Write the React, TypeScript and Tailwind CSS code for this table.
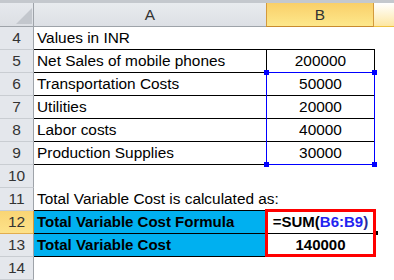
import React from "react";

type CellProps = { className?: string; children?: React.ReactNode };

const RowHead = ({ n, active }: { n: number; active?: boolean }) => (
  <div
    className={
      "w-[34px] shrink-0 h-[23px] border-r border-b text-center leading-[22px] text-[15.5px] text-[#333] " +
      (active
        ? "bg-gradient-to-b from-[#f9d574] to-[#fde28a] border-r-[#d39a3c] border-b-[#e2ad4f]"
        : "bg-[#e4e7ec] border-r-[#9ea3a9] border-b-[#c9cdd2]")
    }
  >
    {n}
  </div>
);

const A = ({ className = "", children }: CellProps) => (
  <div className={"w-[233px] shrink-0 h-[23px] pl-[3px] leading-[22px] whitespace-nowrap " + className}>{children}</div>
);
const B = ({ className = "", children }: CellProps) => (
  <div className={"w-[108px] shrink-0 h-[23px] text-center leading-[22px] whitespace-nowrap " + className}>{children}</div>
);

const Row = ({ children }: { children: React.ReactNode }) => <div className="flex h-[23px]">{children}</div>;

export default function App() {
  return (
    <div className="relative w-[394px] h-[280px] overflow-hidden bg-white text-black text-[15.4px] font-['Liberation_Sans',Arial,sans-serif]">
      {/* top strip */}
      <div className="h-[3px] bg-[#c4c8cd]" />
      {/* column headers */}
      <div className="flex h-[24px]">
        <div className="relative w-[34px] shrink-0 border-r border-b border-r-[#9ea3a9] border-b-[#9ea3a9] bg-gradient-to-b from-[#e6e9ed] to-[#dcdfe4]">
          <svg className="absolute right-[1px] bottom-[2px]" width="16" height="16" viewBox="0 0 16 16">
            <polygon points="16,0 16,16 0,16" fill="#c3c7cd" />
          </svg>
        </div>
        <div className="w-[233px] shrink-0 border-r border-b border-r-[#b8bcc2] border-b-[#9ea3a9] bg-gradient-to-b from-[#e8ebee] to-[#dde0e5] text-center leading-[23px] text-[#333]">
          A
        </div>
        <div className="w-[108px] shrink-0 border-x border-b border-x-[#d39a3c] border-b-[#c88a2e] bg-gradient-to-b from-[#f9cf68] to-[#fde88c] text-center leading-[23px] text-[#333] -ml-[1px]">
          B
        </div>
        <div className="flex-1 border-b border-b-[#efc142] bg-gradient-to-b from-[#ffffff] to-[#fde7a2]" />
      </div>

      <Row>
        <RowHead n={4} />
        <A className="border-b border-b-black">Values in INR</A>
        <B className="border-b border-b-black" />
      </Row>
      {[
        ["Net Sales of mobile phones", "200000"],
        ["Transportation Costs", "50000"],
        ["Utilities", "20000"],
        ["Labor costs", "40000"],
        ["Production Supplies", "30000"],
      ].map(([label, val], i) => (
        <Row key={label}>
          <RowHead n={5 + i} />
          <A className="border-b border-r border-black">{label}</A>
          <B className="border-b border-r border-black">{val}</B>
        </Row>
      ))}
      <Row>
        <RowHead n={10} />
        <A />
        <B />
      </Row>
      <Row>
        <RowHead n={11} />
        <A className="border-b border-b-black">Total Variable Cost is calculated as:</A>
        <B className="border-b border-b-black" />
      </Row>
      <Row>
        <RowHead n={12} active />
        <A className="bg-[#00b0f0] border-b border-r border-black font-bold text-[15px]">Total Variable Cost Formula</A>
        <B className="border-b border-r border-black font-bold text-[15px]">
          =SUM(<span className="text-[#2323f0]">B6:B9</span>
          <span className="text-[#2a2a9a]">)</span>
        </B>
      </Row>
      <Row>
        <RowHead n={13} />
        <A className="bg-[#00b0f0] border-b border-r border-black font-bold text-[15px]">Total Variable Cost</A>
        <B className="border-b border-r border-black font-bold text-[15px]">140000</B>
      </Row>
      <Row>
        <RowHead n={14} />
        <A />
        <B />
      </Row>

      {/* blue range highlight B6:B9 */}
      <div className="absolute left-[266px] top-[72px] w-[109px] h-[93px] border border-[#0000ff]" />
      <div className="absolute left-[264px] top-[70px] w-[5px] h-[5px] bg-[#0000ff]" />
      <div className="absolute left-[372px] top-[70px] w-[5px] h-[5px] bg-[#0000ff]" />
      <div className="absolute left-[264px] top-[162px] w-[5px] h-[5px] bg-[#0000ff]" />
      <div className="absolute left-[372px] top-[162px] w-[5px] h-[5px] bg-[#0000ff]" />

      {/* fill handle */}
      <div className="absolute left-[374px] top-[231px] w-[4px] h-[4px] bg-black" />
      {/* red box */}
      <div className="absolute left-[265px] top-[209px] w-[111px] h-[48px] border-[3px] border-[#ff0000]" />
    </div>
  );
}
